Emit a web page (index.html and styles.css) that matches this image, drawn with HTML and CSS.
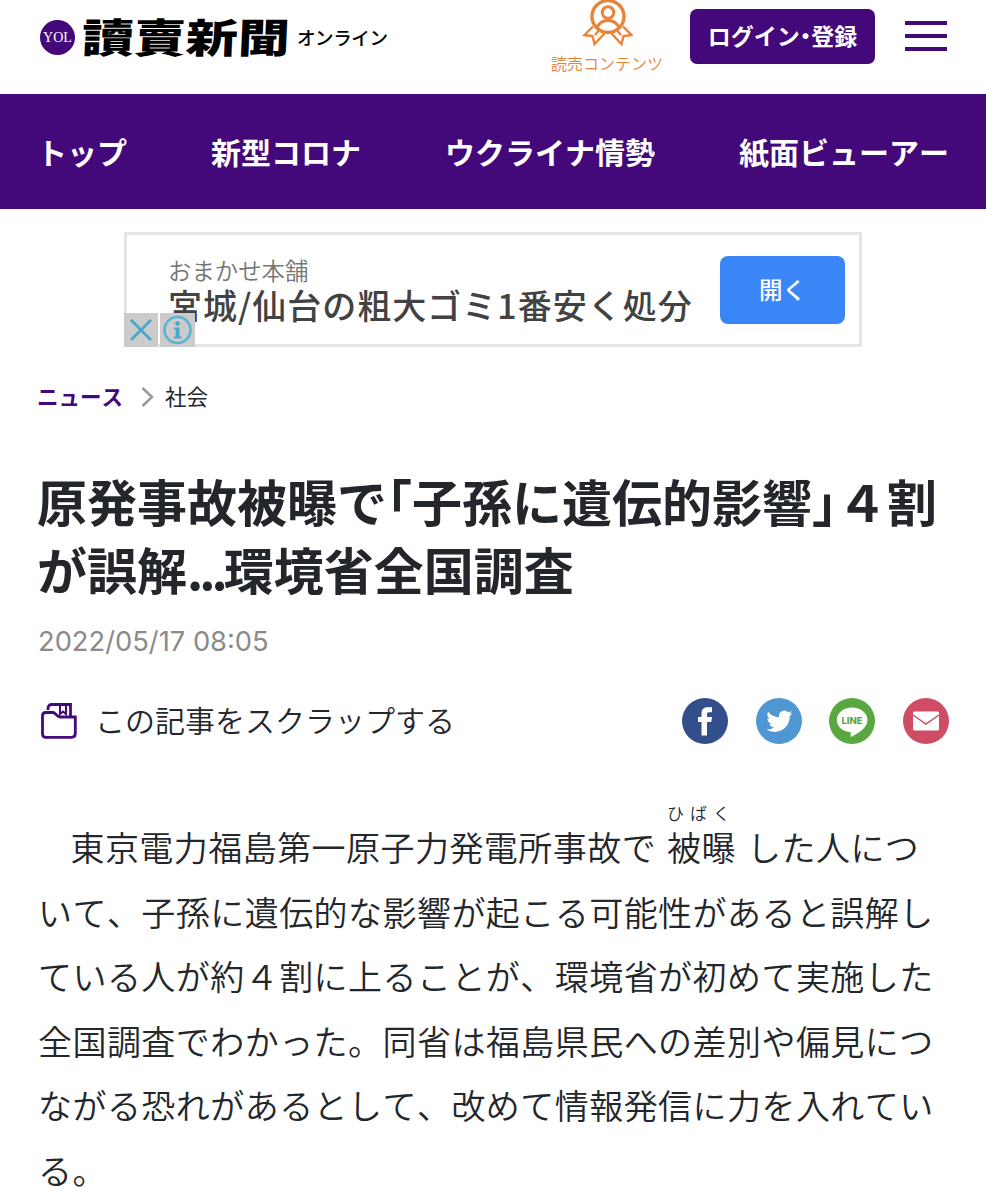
FILE: index.html
```html
<!DOCTYPE html>
<html lang="ja">
<head>
<meta charset="utf-8">
<title>読売新聞オンライン</title>
<link rel="stylesheet" href="styles.css">
</head>
<body>
<header class="header">
  <a class="logo">
    <span class="logo-badge">YOL</span>
    <span class="logo-name">讀賣新聞</span>
    <span class="logo-sub">オンライン</span>
  </a>
  <div class="tools">
    <a class="contents">
      <svg width="52" height="50" viewBox="0 0 52 50" fill="none" stroke="#e8833a" stroke-width="3">
        <circle cx="27" cy="16.500" r="16" stroke-width="3.400"/>
        <circle cx="27" cy="12.500" r="5.800"/>
        <path d="M16 28C18 22.500 22 20.500 27 20.500S36 22.500 38 28"/>
        <path d="M12 26.500L3.500 35L11.500 36L13.500 44L23.500 33.500M42 26.500L50.500 35L42.500 36L40.500 44L30.500 33.500M17.500 31L14 35M36.500 31L40 35" stroke-width="2.400"/>
      </svg>
      <span class="contents-label">読売コンテンツ</span>
    </a>
    <a class="login">ログイン<span class="dot">・</span>登録</a>
    <div class="menu"><i></i><i></i><i></i></div>
  </div>
</header>
<nav class="nav"><a>トップ</a><a>新型コロナ</a><a>ウクライナ情勢</a><a>紙面ビューアー</a></nav>
<main class="main">
  <aside class="ad">
    <div class="ad-copy">
      <div class="ad-brand">おまかせ本舗</div>
      <div class="ad-title">宮城/仙台の粗大ゴミ1番安く処分</div>
    </div>
    <a class="ad-button">開く</a>
    <div class="ad-marks">
      <svg width="34" height="34" viewBox="0 0 34 34"><rect width="34" height="34" fill="#cbcbcb"/><path d="M7 7L27 27M27 7L7 27" stroke="#45a9cc" stroke-width="2.600"/></svg>
      <svg width="35" height="34" viewBox="0 0 35 34"><rect width="35" height="34" fill="#cbcbcb"/><circle cx="17.500" cy="17" r="13" fill="none" stroke="#58b4d2" stroke-width="2.600"/><circle cx="17.500" cy="10.500" r="2.300" fill="#45a9cc"/><path d="M14 14.500h5.500v9h2v2H14v-2h1.700V16.500H14z" fill="#45a9cc"/></svg>
    </div>
  </aside>
  <div class="crumbs">
    <a class="crumb-root">ニュース</a>
    <svg width="13" height="22" viewBox="0 0 13 22"><path d="M1.500 2L11 11L1.500 20" fill="none" stroke="#999" stroke-width="2.500"/></svg>
    <a>社会</a>
  </div>
  <h1 class="title">原発事故被曝で<span class="half">「</span>子孫に遺伝的影響<span class="half">」</span>４割<br>が誤解<span class="ellipsis">...</span>環境省全国調査</h1>
  <time class="date">2022/05/17 08:05</time>
  <div class="actions">
    <a class="scrap">
      <svg width="36" height="36" viewBox="0 0 36 36" fill="none" stroke="#43087a" stroke-width="2.800">
        <path d="M1.500 31V13Q1.500 9.500 5 9.500H11.500Q13 9.500 14 10.500L17 13.200Q18 14 19.500 14H34.300V30.500Q34.300 34.300 30.500 34.300H5Q1.500 34.300 1.500 31Z"/>
        <path d="M7 7V5.500Q7 1.500 11 1.500H29.500V14" />
        <path d="M19 2V11L22 8.500L25 11V2" stroke-width="2"/>
      </svg>
      <span class="scrap-label">この記事をスクラップする</span>
    </a>
    <div class="share">
      <svg width="46" height="46" viewBox="0 0 46 46"><circle cx="23" cy="23" r="23" fill="#324f8b"/><path d="M19.500 37.500V24H16v-5h3.500v-3.500C19.500 11 22 9.300 26 9.300h4v5h-3c-1.500 0-2 .7-2 2V19h5l-.7 5H25v13.500z" fill="#fff"/></svg>
      <svg width="46" height="46" viewBox="0 0 46 46"><circle cx="23" cy="23" r="23" fill="#4f97d2"/><path transform="translate(10.300 10.200) scale(1.090)" fill="#fff" d="M23.950 4.570a10 10 0 0 1-2.820.770 4.960 4.960 0 0 0 2.160-2.720c-.950.550-2 .950-3.130 1.180a4.920 4.920 0 0 0-8.380 4.480C7.690 8.100 4.070 6.130 1.640 3.160a4.820 4.820 0 0 0-.670 2.480c0 1.710.870 3.210 2.190 4.100a4.900 4.900 0 0 1-2.230-.620v.060a4.920 4.920 0 0 0 3.950 4.830 5 5 0 0 1-2.210.080 4.940 4.940 0 0 0 4.600 3.420A9.870 9.870 0 0 1 0 19.540a14 14 0 0 0 7.550 2.210c9.050 0 14-7.500 14-13.980 0-.210 0-.420-.020-.630a9.940 9.940 0 0 0 2.460-2.550z"/></svg>
      <svg width="46" height="46" viewBox="0 0 46 46"><circle cx="23" cy="23" r="23" fill="#58a83f"/><path d="M23 9.500C31.500 9.500 38.500 15 38.500 22C38.500 29 31 34.500 22.500 38.700C21.500 39 21.300 38.500 21.700 37.500V34.300C13.500 33.500 7.800 28.500 7.800 22C7.800 15 14.500 9.500 23 9.500Z" fill="#fff"/><text x="23" y="26" text-anchor="middle" textLength="21" class="line-text">LINE</text></svg>
      <svg width="46" height="46" viewBox="0 0 46 46"><circle cx="23" cy="23" r="23" fill="#cf4d64"/><rect x="10" y="13.500" width="26" height="19" rx="1.500" fill="#fff"/><path d="M10 17L23 26L36 17" fill="none" stroke="#cf4d64" stroke-width="1.500"/></svg>
    </div>
  </div>
  <p class="body-text">　東京電力福島第一原子力発電所事故で<ruby>被曝<rt>ひばく</rt></ruby>した人につ<br>いて、子孫に遺伝的な影響が起こる可能性があると誤解し<br>ている人が約４割に上ることが、環境省が初めて実施した<br>全国調査でわかった。同省は福島県民への差別や偏見につ<br>ながる恐れがあるとして、改めて情報発信に力を入れてい<br>る。</p>
</main>
</body>
</html>
```
FILE: styles.css
```css
* { box-sizing: border-box; }
body {
  margin: 0;
  width: 986px;
  height: 1200px;
  overflow: hidden;
  background: #fff;
  color: #23272b;
  font-family: "Noto Sans CJK JP", sans-serif;
  font-kerning: none;
  text-spacing-trim: space-all;
  white-space: nowrap;
}
svg { display: block; flex: none; }
.header {
  height: 94px;
  padding: 0 39px 0 40px;
  display: flex;
  justify-content: space-between;
  align-items: flex-start;
}
.logo { display: flex; align-items: center; height: 74px; color: #000; }
.logo-badge {
  width: 35px;
  height: 35px;
  border-radius: 50%;
  background: #43087a;
  color: #fff;
  font: 14px/35px "Liberation Serif", serif;
  text-align: center;
}
.logo-name {
  margin-left: 7px;
  width: 208px;
  font-size: 52px;
  line-height: 74px;
  font-weight: 900;
  transform: translateY(-1px) scaleY(.78) skewX(-2deg);
}
.logo-sub { margin-left: 7px; font-size: 18.500px; line-height: 74px; font-weight: 500; letter-spacing: -.4px; }
.tools { display: flex; align-items: flex-start; }
.contents { display: flex; flex-direction: column; align-items: center; width: 112px; color: #e8833a; }
.contents-label { font-size: 16px; line-height: 26px; font-weight: 350; }
.login {
  margin: 9px 0 0 27px;
  width: 185px;
  height: 55px;
  border-radius: 7px;
  background: #43087a;
  color: #fff;
  font-size: 23px;
  line-height: 53px;
  font-weight: 700;
  text-align: center;
}
.dot { font-feature-settings: "halt"; }
.menu { margin: 21px 0 0 30px; width: 42px; display: grid; gap: 9px; }
.menu i { height: 4px; background: #43087a; }
.nav {
  height: 115px;
  padding: 0 37px;
  display: flex;
  justify-content: space-between;
  background: #43087a;
  color: #fff;
  font-size: 30px;
  line-height: 115px;
  font-weight: 700;
}
.main { padding: 23px 37px 0 38px; }
.ad {
  position: relative;
  width: 738px;
  height: 115px;
  margin-left: 86px;
  padding: 21px 14px 0 41px;
  border: 3px solid #e5e5e5;
  display: flex;
  justify-content: space-between;
}
.ad-brand { font-size: 23.400px; line-height: 28px; color: #757575; font-weight: 350; }
.ad-title { margin-top: 1px; font-size: 34px; line-height: 40px; font-weight: 500; letter-spacing: 1px; color: #424242; }
.ad-button {
  width: 125px;
  height: 68px;
  border-radius: 8px;
  background: #3b86f7;
  color: #fff;
  font-size: 23.500px;
  line-height: 66px;
  text-align: center;
  font-weight: 500;
}
.ad-marks { position: absolute; left: -3px; bottom: -3px; display: flex; gap: 2px; }
.crumbs { margin: 33px 0 0 -1px; height: 34px; display: flex; align-items: center; font-size: 21.500px; line-height: 32px; }
.crumbs a { padding-bottom: 2px; }
.crumb-root { color: #43087a; font-weight: 700; }
.crumbs svg { margin: 0 11px 0 18px; }
.title { margin: 53px 0 0 -1px; font-size: 50px; line-height: 67.500px; font-weight: 700; }
.half { font-feature-settings: "halt"; }
.ellipsis { letter-spacing: -4px; }
.date { display: block; margin-top: 20px; font: 400 27.300px/40px Inter, sans-serif; color: #8a8a8a; }
.actions { margin-top: 36px; height: 46px; padding-left: 3px; display: flex; justify-content: space-between; align-items: center; }
.scrap { display: flex; align-items: center; gap: 18px; font-size: 30px; line-height: 42px; font-weight: 350; }
.scrap-label { padding-bottom: 4px; }
.share { display: flex; gap: 27.670px; }
.line-text { font: 800 9.500px Inter, sans-serif; fill: #58a83f; }
.body-text { margin: 56px 0 0; font-size: 34px; letter-spacing: .450px; line-height: 64.600px; font-weight: 350; text-indent: -2px; }
ruby { margin: 0 11px 0 11px; }
rt { font-size: 17px; line-height: 17px; letter-spacing: 6px; padding-bottom: 6px; text-indent: 0; ruby-align: center; }
```
